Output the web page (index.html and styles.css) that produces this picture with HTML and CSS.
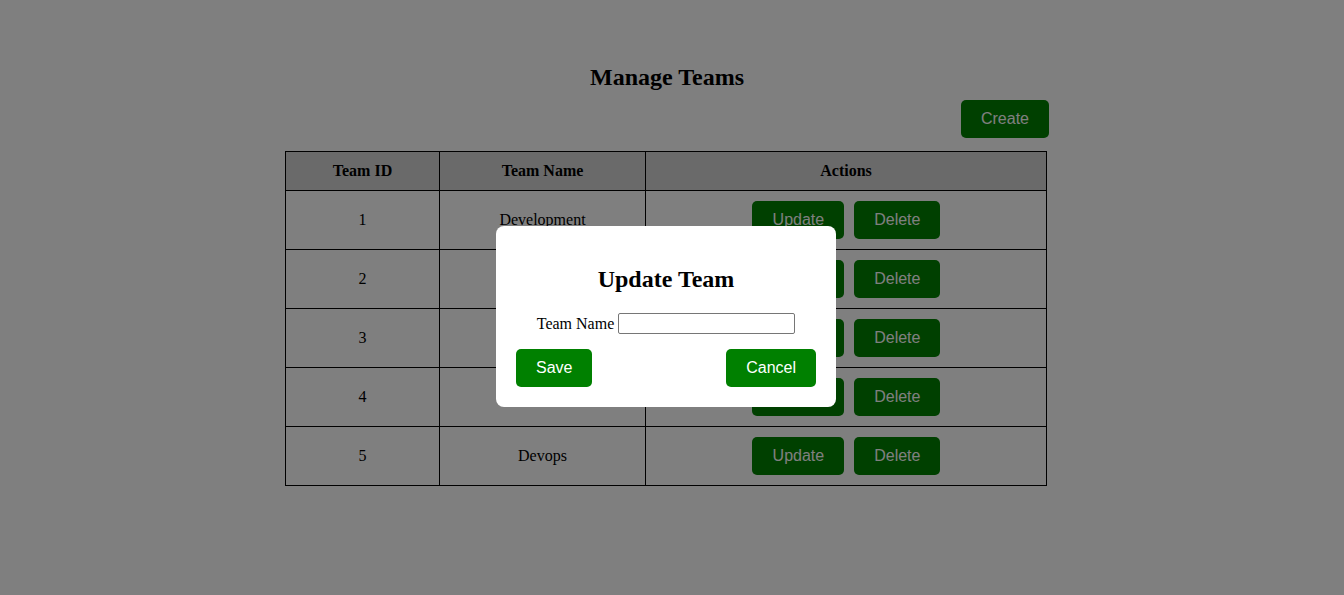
FILE: index.html
```html
<!DOCTYPE html>
<html lang="en">
<head>
<meta charset="utf-8">
<title>Manage Teams</title>
<link rel="stylesheet" href="styles.css">
</head>
<body>
<div class="page">
  <h2 class="title">Manage Teams</h2>
  <div class="toolbar">
    <button class="btn">Create</button>
  </div>
  <table class="teams">
    <colgroup>
      <col class="c-id">
      <col class="c-name">
      <col class="c-actions">
    </colgroup>
    <thead>
      <tr><th>Team ID</th><th>Team Name</th><th>Actions</th></tr>
    </thead>
    <tbody>
      <tr><td>1</td><td>Development</td><td><div class="actions"><button class="btn">Update</button><button class="btn">Delete</button></div></td></tr>
      <tr><td>2</td><td>Testing</td><td><div class="actions"><button class="btn">Update</button><button class="btn">Delete</button></div></td></tr>
      <tr><td>3</td><td>Design</td><td><div class="actions"><button class="btn">Update</button><button class="btn">Delete</button></div></td></tr>
      <tr><td>4</td><td>Marketing</td><td><div class="actions"><button class="btn">Update</button><button class="btn">Delete</button></div></td></tr>
      <tr><td>5</td><td>Devops</td><td><div class="actions"><button class="btn">Update</button><button class="btn">Delete</button></div></td></tr>
    </tbody>
  </table>
</div>
<div class="overlay">
  <div class="modal">
    <h2 class="modal-title">Update Team</h2>
    <div class="field">
      <label for="teamName">Team Name</label>
      <input id="teamName" type="text">
    </div>
    <div class="modal-buttons">
      <button class="btn">Save</button>
      <button class="btn">Cancel</button>
    </div>
  </div>
</div>
</body>
</html>
```
FILE: styles.css
```css
html, body {
  height: 100%;
}
body {
  margin: 0;
  padding: 0 10px 0 0;
  background: #ffffff;
  font-family: "Liberation Serif", "Times New Roman", serif;
  font-size: 16px;
  color: #000;
}
.page {
  width: 764px;
  margin: 0 auto;
  padding-top: 44px;
}
.title {
  margin: 19px 0 9px;
  font-size: 24px;
  line-height: 28px;
  font-weight: bold;
  text-align: center;
}
.toolbar {
  display: flex;
  justify-content: flex-end;
  margin-bottom: 13px;
}
.btn {
  font-family: "Liberation Sans", Arial, sans-serif;
  font-size: 16px;
  line-height: 18px;
  padding: 10px 20px;
  border: none;
  border-radius: 5px;
  background: #008000;
  color: #ffffff;
  cursor: pointer;
}
.teams {
  width: 761px;
  border-collapse: collapse;
  table-layout: fixed;
}
.c-id { width: 154px; }
.c-name { width: 206px; }
.c-actions { width: 401px; }
.teams th, .teams td {
  border: 1px solid #000;
  padding: 10px;
  text-align: center;
  line-height: 18px;
}
.teams th {
  background: #d4d4d4;
  font-weight: bold;
}
.actions {
  display: flex;
  justify-content: center;
  gap: 10px;
}
.actions .btn:first-child {
  padding: 10px 20px 10px 21px;
}
.overlay {
  position: fixed;
  inset: 0;
  background: rgba(0, 0, 0, 0.5);
  display: flex;
  align-items: center;
  justify-content: center;
  padding: 38px 12px 0 0;
}
.modal {
  width: 300px;
  background: #ffffff;
  border-radius: 8px;
  padding: 20px;
}
.modal-title {
  margin: 19px 0 20px;
  font-size: 24px;
  line-height: 28px;
  text-align: center;
}
.field {
  display: flex;
  justify-content: center;
  align-items: center;
  gap: 4px;
  height: 21px;
  margin-bottom: 15px;
}
.field input {
  box-sizing: border-box;
  width: 177px;
  height: 21px;
  border: 1px solid #767676;
  border-radius: 2px;
  padding: 1px 2px;
  font-size: 13px;
}
.modal-buttons {
  display: flex;
  justify-content: space-between;
}
```
